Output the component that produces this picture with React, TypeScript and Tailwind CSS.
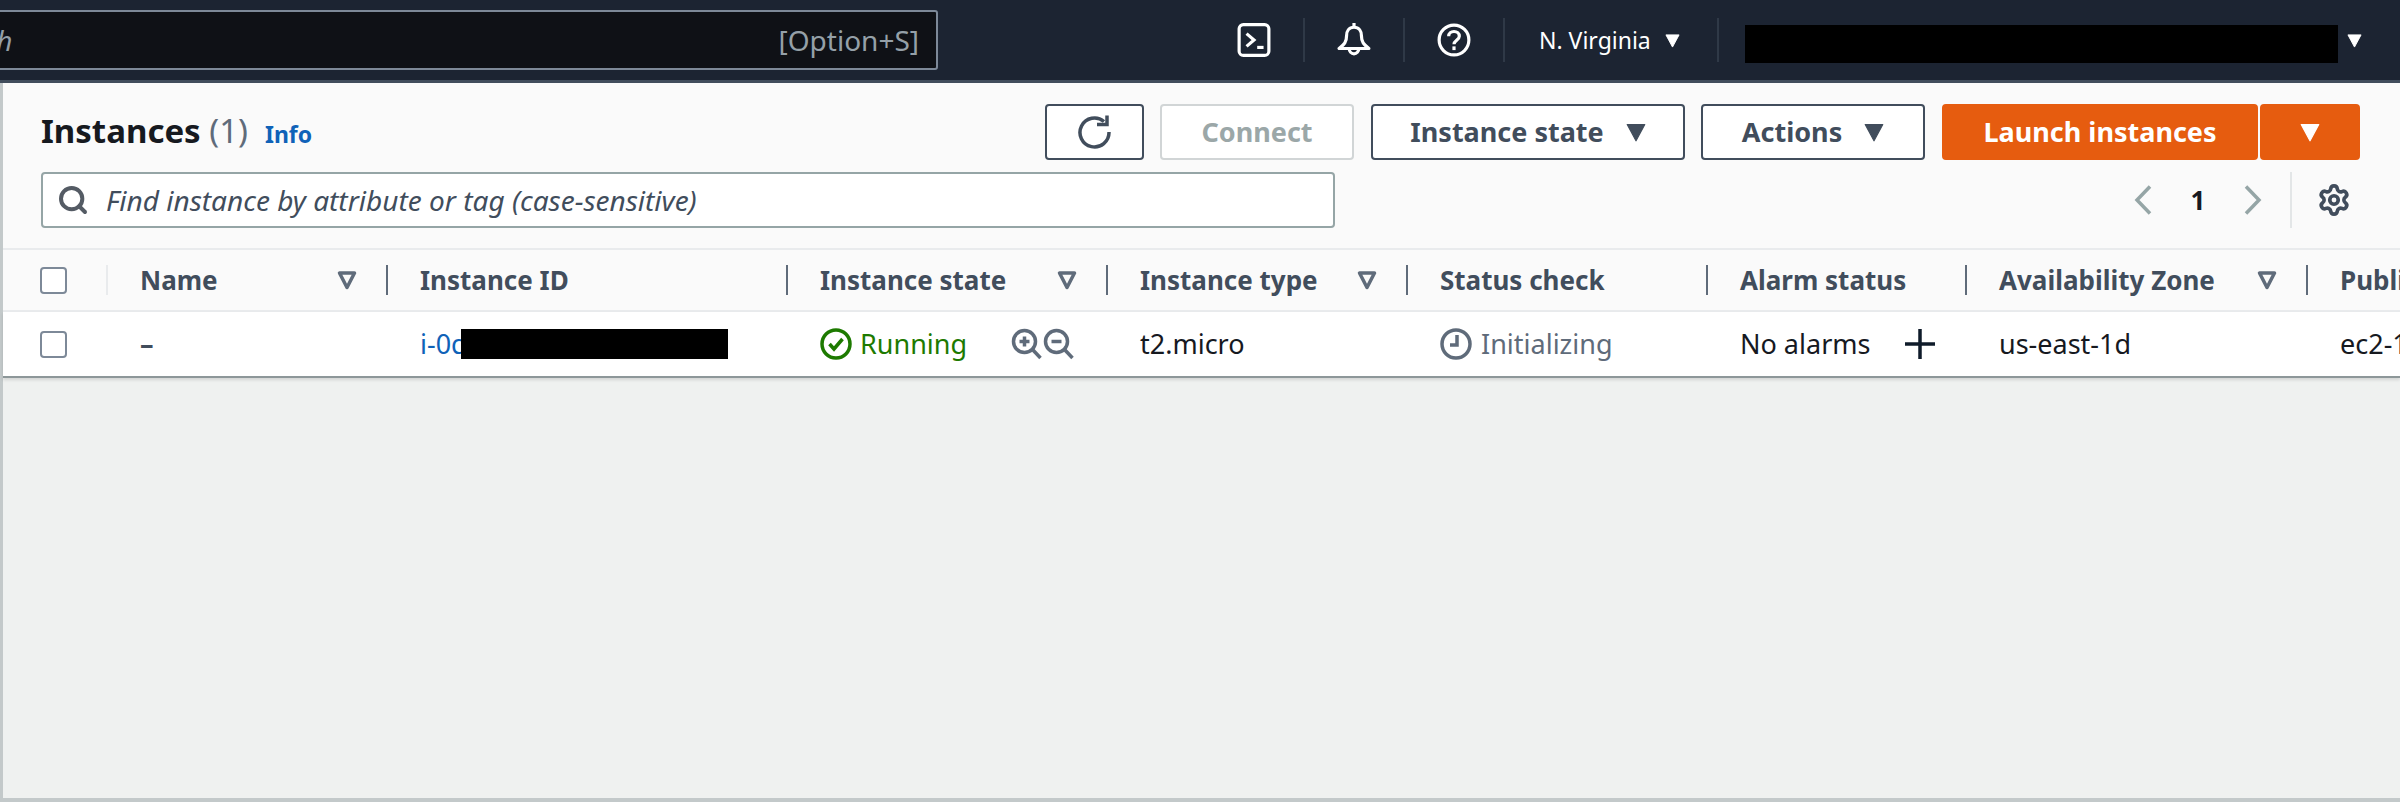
import { Search, Settings } from "lucide-react";
import type { ReactNode } from "react";

function Caret({ className }: { className: string }) {
  return (
    <svg viewBox="0 0 16 16" className={className} fill="currentColor">
      <path d="M1 2h14L8 15z" stroke="currentColor" strokeLinejoin="round" />
    </svg>
  );
}

function SortIcon() {
  return (
    <svg viewBox="0 0 20 20" className="h-[20px] w-[20px] shrink-0 text-[#5f6b7a]" fill="none">
      <path d="M2.500 3h15L10 17.500z" stroke="currentColor" strokeWidth="3.500" strokeLinejoin="round" />
    </svg>
  );
}

function NavDivider() {
  return <div className="h-[44px] w-[2px] shrink-0 bg-[#2f3947]" />;
}

function NavIcon({ children }: { children: ReactNode }) {
  return <div className="flex w-[98px] shrink-0 justify-center">{children}</div>;
}

function Checkbox() {
  return <div className="ml-[37px] h-[27px] w-[27px] rounded-[4px] border-2 border-[#7d8998] bg-white" />;
}

function Button({ className, children }: { className: string; children: ReactNode }) {
  return (
    <div className={`flex h-[56px] items-center justify-center rounded-[4px] border-2 text-[27px] font-bold ${className}`}>
      {children}
    </div>
  );
}

const columns = [
  { title: "Name", width: "w-[280px]", sort: true },
  { title: "Instance ID", width: "w-[400px]", sort: false },
  { title: "Instance state", width: "w-[320px]", sort: true },
  { title: "Instance type", width: "w-[300px]", sort: true },
  { title: "Status check", width: "w-[300px]", sort: false },
  { title: "Alarm status", width: "w-[259px]", sort: false },
  { title: "Availability Zone", width: "w-[341px]", sort: true },
];

export default function App() {
  return (
    <div className="flex h-[802px] w-[2400px] flex-col overflow-hidden bg-[#eff1f0] font-['Noto_Sans',sans-serif] text-[26px] text-[#0f1b2a]">
      <header className="flex h-[83px] shrink-0 items-center border-b-[3px] border-[#414d5c] bg-[#1c2432]">
        <div className="ml-[-200px] flex h-[60px] w-[1138px] shrink-0 items-center justify-between rounded-[3px] border-2 border-[#7d8998] bg-[#0f1116] pl-[127px] pr-[17px] text-[28px] text-[#95a0a8]">
          <span className="italic">Search</span>
          <span>[Option+S]</span>
        </div>

        <div className="ml-[267px] flex items-center">
          <NavIcon>
            <svg viewBox="0 0 32 32" className="h-[34px] w-[34px]" fill="none" stroke="white" strokeWidth="3">
              <rect x="2" y="1.500" width="28" height="29" rx="4" />
              <path d="M9 10l7 6-7 6" />
              <path d="M19 23h6" />
            </svg>
          </NavIcon>
          <NavDivider />
          <NavIcon>
            <svg viewBox="0 0 32 32" className="h-[34px] w-[34px]" fill="none" stroke="white" strokeWidth="3" strokeLinejoin="round">
              <path d="M16 0v4" />
              <path d="M16 4c-5 0-7 4-7 8 0 6-2 8-7 12h28c-5-4-7-6-7-12 0-4-2-8-7-8z" />
              <path d="M11.500 24a4.500 5 0 0 0 9 0" />
            </svg>
          </NavIcon>
          <NavDivider />
          <NavIcon>
            <svg viewBox="0 0 32 32" className="h-[34px] w-[34px]" fill="none" stroke="white" strokeWidth="3">
              <circle cx="16" cy="16" r="14" />
              <path d="M11 12.500c0-3 2.300-4.500 5-4.500s5 1.700 5 4.500c0 3.500-5 4-5 7.500" />
              <path d="M16 22v3.500" />
            </svg>
          </NavIcon>
          <NavDivider />
          <div className="ml-[34px] flex w-[178px] shrink-0 items-center text-[23px] text-white">
            <span>N. Virginia</span>
            <Caret className="ml-[14px] h-[15px] w-[15px] text-white" />
          </div>
          <NavDivider />
          <div className="ml-[26px] mt-[8px] h-[38px] w-[593px] shrink-0 bg-black" />
          <Caret className="ml-[9px] h-[15px] w-[15px] text-white" />
        </div>
      </header>

      <main className="flex flex-1 flex-col border-b-4 border-l-[3px] border-[#c3c9ca]">
        <section className="border-b-2 border-[#e9ebed] bg-[#fafafa] pb-[20px] pl-[38px] pr-[40px] pt-[21px]">
          <div className="flex h-[56px] items-center justify-between">
            <div className="flex items-baseline">
              <h1 className="text-[33px] font-bold leading-[38px] text-[#16191f]">
                Instances <span className="font-normal text-[#5f6b7a]">(1)</span>
              </h1>
              <span className="ml-[17px] text-[23px] font-bold text-[#0f62b8]">Info</span>
            </div>

            <div className="flex items-center">
              <Button className="w-[99px] border-[#414d5c] bg-white">
                <svg viewBox="0 0 34 34" className="h-[34px] w-[34px] text-[#414d5c]" fill="none" stroke="currentColor" strokeWidth="3.500">
                  <path d="M26 6.500A14.500 14.500 0 1 0 31 17" />
                  <path d="M19 9.500h10v-9" />
                </svg>
              </Button>
              <Button className="ml-[16px] w-[194px] border-[#d1d5d6] bg-white text-[#9ba7a8]">Connect</Button>
              <Button className="ml-[17px] w-[314px] border-[#414d5c] bg-white text-[#414d5c]">
                Instance state
                <Caret className="ml-[22px] h-[20px] w-[20px] text-[#414d5c]" />
              </Button>
              <Button className="ml-[16px] w-[224px] border-[#414d5c] bg-white text-[#414d5c]">
                Actions
                <Caret className="ml-[22px] h-[20px] w-[20px] text-[#414d5c]" />
              </Button>
              <Button className="ml-[17px] w-[316px] border-[#e65c0f] bg-[#e65c0f] text-white">Launch instances</Button>
              <Button className="ml-[2px] w-[100px] border-[#e65c0f] bg-[#e65c0f] text-white">
                <Caret className="h-[20px] w-[20px] text-white" />
              </Button>
            </div>
          </div>

          <div className="mt-[12px] flex items-center justify-between">
            <div className="flex h-[56px] w-[1294px] items-center rounded-[4px] border-2 border-[#95a5a6] bg-white pl-[14px] text-[#414d5c]">
              <Search className="h-[32px] w-[32px] text-[#545b64]" strokeWidth={3} />
              <span className="ml-[17px] text-[28px] italic">Find instance by attribute or tag (case-sensitive)</span>
            </div>
            <div className="flex h-[56px] items-center pr-[9px]">
              <svg viewBox="0 0 18 30" className="h-[30px] w-[18px] text-[#95a5a6]" fill="none" stroke="currentColor" strokeWidth="3.500">
                <path d="M16 1.500L3 15l13 13.500" />
              </svg>
              <span className="w-[92px] text-center font-bold text-[#16191f]">1</span>
              <svg viewBox="0 0 18 30" className="h-[30px] w-[18px] text-[#95a5a6]" fill="none" stroke="currentColor" strokeWidth="3.500">
                <path d="M2 1.500L15 15 2 28.500" />
              </svg>
              <div className="ml-[28px] h-[56px] w-[2px] bg-[#e3e6e7]" />
              <Settings className="ml-[25px] h-[34px] w-[34px] text-[#414d5c]" strokeWidth={2.600} />
            </div>
          </div>
        </section>

        <div className="flex h-[62px] items-center whitespace-nowrap border-b-2 border-[#e9ebed] bg-[#fafafa] font-bold text-[#414d5c]">
          <div className="flex w-[105px] shrink-0 items-center justify-between">
            <Checkbox />
            <div className="h-[30px] w-[2px] bg-[#e9ebed]" />
          </div>
          {columns.map((col) => (
            <div key={col.title} className={`flex shrink-0 items-center justify-between pl-[32px] ${col.width}`}>
              <span>{col.title}</span>
              <div className="flex items-center">
                {col.sort && <SortIcon />}
                <div className="ml-[29px] h-[30px] w-[2px] bg-[#5f6b7a]" />
              </div>
            </div>
          ))}
          <div className="shrink-0 pl-[32px]">Public IPv4 DNS</div>
        </div>

        <div className="flex h-[66px] items-center whitespace-nowrap border-b-2 border-[#8d9799] bg-white text-[27px] shadow-[0_2px_3px_rgba(0,0,0,0.12)]">
          <div className="w-[105px] shrink-0">
            <Checkbox />
          </div>
          <div className="w-[280px] shrink-0 pl-[32px] font-bold text-[#414d5c]">–</div>
          <div className="flex w-[400px] shrink-0 items-center pl-[32px]">
            <span className="w-[41px] overflow-hidden text-[#0f62b8]">i-0d</span>
            <div className="h-[30px] w-[267px] bg-black" />
          </div>
          <div className="flex w-[320px] shrink-0 items-center justify-between pl-[32px] pr-[33px]">
            <div className="flex items-center text-[#1d7a00]">
              <svg viewBox="0 0 32 32" className="h-[32px] w-[32px]" fill="none" stroke="currentColor" strokeWidth="3.500">
                <circle cx="16" cy="16" r="14" />
                <path d="M9.500 16l4.500 5 8.500-10" />
              </svg>
              <span className="ml-[8px]">Running</span>
            </div>
            <div className="flex items-center text-[#5f6b7a]">
              {[true, false].map((plus) => (
                <svg key={String(plus)} viewBox="0 0 32 32" className="h-[32px] w-[32px]" fill="none" stroke="currentColor" strokeWidth="3.500">
                  <circle cx="13.500" cy="13.500" r="11" />
                  <path d="M21.500 21.500l8 8.500" />
                  <path d="M8.500 13.500h10" />
                  {plus && <path d="M13.500 8.500v10" />}
                </svg>
              ))}
            </div>
          </div>
          <div className="w-[300px] shrink-0 pl-[32px] text-[#16191f]">t2.micro</div>
          <div className="flex w-[300px] shrink-0 items-center pl-[32px] text-[#5f6b7a]">
            <svg viewBox="0 0 32 32" className="h-[32px] w-[32px]" fill="none" stroke="currentColor" strokeWidth="3.500">
              <circle cx="16" cy="16" r="14" />
              <path d="M17 7v10h-7" />
            </svg>
            <span className="ml-[9px]">Initializing</span>
          </div>
          <div className="flex w-[259px] shrink-0 items-center justify-between pl-[32px] pr-[32px] text-[#16191f]">
            <span>No alarms</span>
            <svg viewBox="0 0 30 30" className="h-[30px] w-[30px]" fill="none" stroke="#0f1b2a" strokeWidth="3.500">
              <path d="M15 0v30M0 15h30" />
            </svg>
          </div>
          <div className="w-[341px] shrink-0 pl-[32px] text-[#16191f]">us-east-1d</div>
          <div className="shrink-0 pl-[32px] text-[#16191f]">ec2-18-206-1-55.compute-1.amazonaws.com</div>
        </div>
      </main>
    </div>
  );
}
